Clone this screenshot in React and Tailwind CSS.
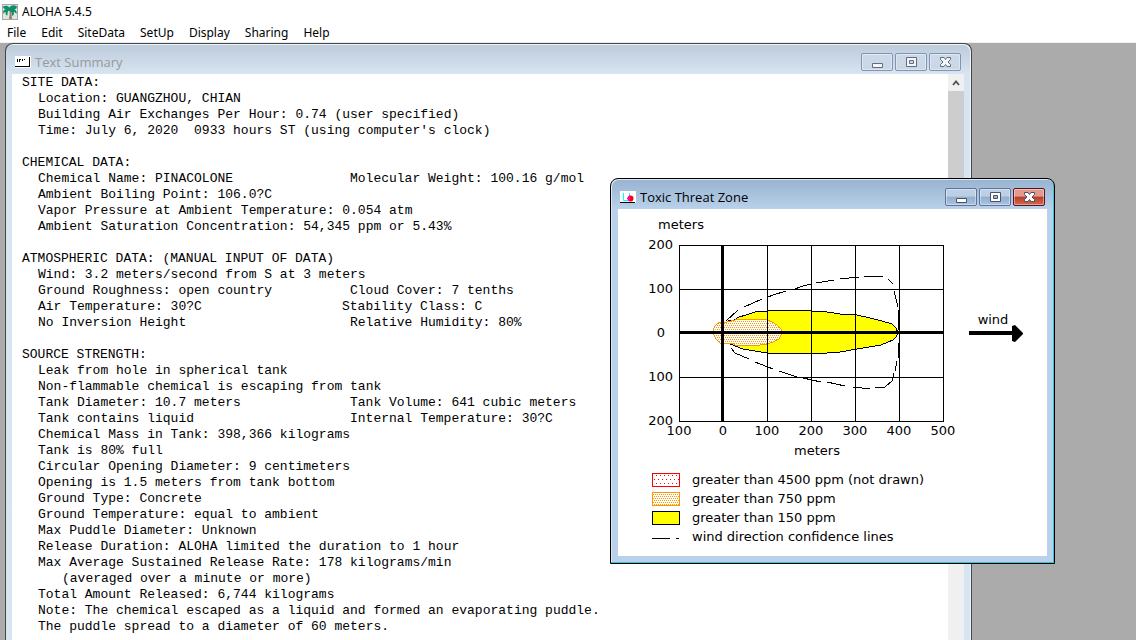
import React from 'react'

// [indent class, left text, right text, left column width]
const summary = [
  ['pl-0', 'SITE DATA:'],
  ['pl-4', 'Location: GUANGZHOU, CHIAN'],
  ['pl-4', 'Building Air Exchanges Per Hour: 0.74 (user specified)'],
  ['pl-4', "Time: July 6, 2020  0933 hours ST (using computer's clock)"],
  null,
  ['pl-0', 'CHEMICAL DATA:'],
  ['pl-4', 'Chemical Name: PINACOLONE', 'Molecular Weight: 100.16 g/mol'],
  ['pl-4', 'Ambient Boiling Point: 106.0?C'],
  ['pl-4', 'Vapor Pressure at Ambient Temperature: 0.054 atm'],
  ['pl-4', 'Ambient Saturation Concentration: 54,345 ppm or 5.43%'],
  null,
  ['pl-0', 'ATMOSPHERIC DATA: (MANUAL INPUT OF DATA)'],
  ['pl-4', 'Wind: 3.2 meters/second from S at 3 meters'],
  ['pl-4', 'Ground Roughness: open country', 'Cloud Cover: 7 tenths'],
  ['pl-4', 'Air Temperature: 30?C', 'Stability Class: C', 'w-[304px]'],
  ['pl-4', 'No Inversion Height', 'Relative Humidity: 80%'],
  null,
  ['pl-0', 'SOURCE STRENGTH:'],
  ['pl-4', 'Leak from hole in spherical tank'],
  ['pl-4', 'Non-flammable chemical is escaping from tank'],
  ['pl-4', 'Tank Diameter: 10.7 meters', 'Tank Volume: 641 cubic meters'],
  ['pl-4', 'Tank contains liquid', 'Internal Temperature: 30?C'],
  ['pl-4', 'Chemical Mass in Tank: 398,366 kilograms'],
  ['pl-4', 'Tank is 80% full'],
  ['pl-4', 'Circular Opening Diameter: 9 centimeters'],
  ['pl-4', 'Opening is 1.5 meters from tank bottom'],
  ['pl-4', 'Ground Type: Concrete'],
  ['pl-4', 'Ground Temperature: equal to ambient'],
  ['pl-4', 'Max Puddle Diameter: Unknown'],
  ['pl-4', 'Release Duration: ALOHA limited the duration to 1 hour'],
  ['pl-4', 'Max Average Sustained Release Rate: 178 kilograms/min'],
  ['pl-10', '(averaged over a minute or more)'],
  ['pl-4', 'Total Amount Released: 6,744 kilograms'],
  ['pl-4', 'Note: The chemical escaped as a liquid and formed an evaporating puddle.'],
  ['pl-4', 'The puddle spread to a diameter of 60 meters.'],
]

const menus = ['File', 'Edit', 'SiteData', 'SetUp', 'Display', 'Sharing', 'Help']

function PalmIcon() {
  return (
    <svg viewBox="0 0 16 16" className="w-4 h-4 shrink-0" aria-hidden="true">
      <rect width="16" height="16" fill="#a8a8a8" />
      <rect x="1" y="1" width="14" height="14" fill="#dfe5e2" />
      <path d="M7 15c.8-3 .8-6 .3-9h1.700c.5 3 .5 6 1 9z" fill="#9a7b58" />
      <path d="M8 7C6 6 5.500 8 5.500 11.500 3.500 11 3 9.500 4 8 2.500 8 1.500 9 1.500 10 .5 7.500 1.500 5.500 4 5 2.500 5 1 4.500 1 2.500c2.500-1.500 5-1 6.500 1C9 1 12 .5 15 2.500c0 1.500-1 2.500-2.500 3C14.500 6 15 8 14.500 10c-1-1.500-2-2-3-2 1 1.500.5 3-1.500 4C10 9.500 9.500 7.500 8 7z" fill="#0f8f68" />
    </svg>
  )
}

function SummaryIcon() {
  return (
    <svg viewBox="0 0 16 12" className="w-4 h-3 shrink-0" shapeRendering="crispEdges" aria-hidden="true">
      <rect width="16" height="12" fill="#fff" />
      <path d="M0 10h15v1H0zM14 1h1v10h-1zM2 3h1v3H2zM4 3h2v1H4zM4 4h1v2H4zM7 3h1v2H7zM9 3h1v1H9z" fill="#000" />
    </svg>
  )
}

function ThreatIcon() {
  return (
    <svg viewBox="0 0 16 12" className="w-4 h-3 shrink-0" aria-hidden="true">
      <rect width="16" height="12" fill="#fff" />
      <path d="M3.500 2v7.500H8M9.500 2v3" fill="none" stroke="#0ff" />
      <circle cx="10.500" cy="7.500" r="3" fill="#f00" />
      <path d="M9.500 4v6M7 7.500h2" stroke="#f0f" />
      <path d="M0 11.500h15" stroke="#000" />
    </svg>
  )
}

const glyphs = {
  Minimize: <path d="M11.500 9.500h10v4h-10z" fill="#fff" stroke="#4b5068" />,
  Restore: <path d="M11.500 3.500h10v9h-10zM14.500 6.500v3h4v-3z" fill="#fff" fillRule="evenodd" stroke="#4b5068" />,
  Close: (
    <path d="M11.500 3.500h3.500l1.500 2 1.500-2h3.500v2l-2.500 2.500 2.500 2.500v2H18l-1.500-2-1.500 2h-3.500v-2l2.500-2.500-2.500-2.500z" fill="#fff" stroke="#4b5068" />
  ),
}

function CaptionButton({ name, active }) {
  let look = 'border-[#8493b3] bg-linear-to-b from-[#cbd9e8] to-[#c9d7e7]'
  if (active) look = 'border-[#5f7394] bg-linear-to-b from-[#bccfe4] from-45% via-[#94afcf] via-50% to-[#a8c3e0]'
  if (active && name === 'Close') look = 'border-[#5a1420] bg-linear-to-b from-[#e39a8e] from-45% via-[#b83c28] via-50% to-[#cf6a4c]'
  return (
    <button type="button" aria-label={name} className={`w-8 h-[18px] rounded-xs border inset-ring inset-ring-white/40 ${look}`}>
      <svg viewBox="1 0 30 16" className={`w-full h-full ${active ? '' : 'opacity-80'}`}>{glyphs[name]}</svg>
    </button>
  )
}

function TitleBar({ icon, title, active }) {
  return (
    <div className="flex items-center h-[30px] px-[3px] pt-[5px]">
      {icon}
      <h2 className={`ml-1 flex-1 font-['Open_Sans',sans-serif] text-[13px] leading-4 ${active ? 'text-black' : 'text-[#999]'}`}>{title}</h2>
      <div className="flex gap-0.5">
        <CaptionButton name="Minimize" active={active} />
        <CaptionButton name="Restore" active={active} />
        <CaptionButton name="Close" active={active} />
      </div>
    </div>
  )
}

// Drawn with the release point at 0,0 and 44 units per 100 meters
function ThreatPlot() {
  const xTicks = [-44, 0, 44, 88, 132, 176, 220]
  const yTicks = [-88, -44, 0, 44, 88]
  return (
    <svg viewBox="-105 -124 429 261" className="block w-full" fontSize="13" role="img" aria-label="Toxic threat zone plot">
      <defs>
        <pattern id="dots" width="2" height="4" patternUnits="userSpaceOnUse">
          <rect width="2" height="4" fill="#fff" />
          <path d="M0 0h1v1H0zM1 2h1v1H1z" fill="#ff9600" />
        </pattern>
      </defs>
      <path
        d="M5-12 11-13 16-16 23-18 32-21 44-22 52-23H85L88-22 104-21 117-19 134-18 147-15 159-12 169-9 173-5 175 0 173 4 170 7 158 12 134 16 117 19 104 20H44L20 16 12 13 5 10z"
        fill="#ff0" stroke="#000" shapeRendering="crispEdges"
      />
      <path
        d="M-10-3-8-7-5-10-1-11H4L12-13 17-14H34L44-13 49-11 54-8 57-5 59-3 58 2 56 6 50 9 44 11 37 12 14 13 9 10H-3L-7 6-9 2z"
        fill="url(#dots)" stroke="#ff9600" shapeRendering="crispEdges"
      />
      <g fill="#000" shapeRendering="crispEdges">
        {xTicks.map((x) => <rect key={x} x={x} y="-88" width="1" height="177" />)}
        {yTicks.map((y) => <rect key={y} x="-44" y={y} width="265" height="1" />)}
        <rect x="-2" y="-88" width="3" height="176" />
        <rect x="-44" y="-2" width="264" height="3" />
      </g>
      <path
        d="M3-12 15-23M21-26 39-34M45-36 50-38 63-42M69-43 80-47 88-49M93-50 111-53M117-54 136-56M141-57H160M165-54 170-49M171-42 175-26M175-23 176-3M8 15 12 20 26 26M32 29 50 36M56 38 74 44M80 45 98 49M104 49 122 53M130 54 147 56M152 55 162 54 169 48 171 40M172 38 174 28M175 25 176 10"
        fill="none" stroke="#000" shapeRendering="crispEdges"
      />
      <path d="M246-2h43v-5l3-1 8 8v1l-8 8-3-1V2h-43z" fill="#000" />
      <g textAnchor="middle">
        {xTicks.map((x) => <text key={x} x={x} y="102">{Math.abs(x / 0.44)}</text>)}
        <text x="94" y="122">meters</text>
        <text x="-42" y="-104">meters</text>
        <text x="270" y="-9">wind</text>
      </g>
      <g textAnchor="end">
        {yTicks.map((y) => <text key={y} x={y === 0 ? -58 : -50} y={y + 4}>{Math.abs(y / 0.44)}</text>)}
      </g>
    </svg>
  )
}

function Swatch({ kind }) {
  return (
    <svg viewBox="0 0 28 14" className="w-7 h-3.5 shrink-0" shapeRendering="crispEdges" aria-hidden="true">
      <defs>
        <pattern id="sparse" width="4" height="8" patternUnits="userSpaceOnUse">
          <path d="M0 2h1v1H0zM2 6h1v1H2z" fill="#f00" />
        </pattern>
      </defs>
      {kind === 'red' && <rect x=".5" y=".5" width="27" height="13" fill="url(#sparse)" stroke="#f00" />}
      {kind === 'orange' && <rect x=".5" y=".5" width="27" height="13" fill="url(#dots)" stroke="#ff9600" />}
      {kind === 'yellow' && <rect x=".5" y=".5" width="27" height="13" fill="#ff0" stroke="#000" />}
      {kind === 'line' && <path d="M0 8.500h18M24 8.500h3" stroke="#000" />}
    </svg>
  )
}

const legend = [
  ['red', 'greater than 4500 ppm (not drawn)'],
  ['orange', 'greater than 750 ppm'],
  ['yellow', 'greater than 150 ppm'],
  ['line', 'wind direction confidence lines'],
]

export default function App() {
  return (
    <div className="h-screen flex flex-col overflow-hidden bg-white text-black font-['Noto_Sans',sans-serif]">
      <header className="shrink-0 border-b border-[#f0f0f0]">
        <div className="flex items-center gap-1 h-[23px] pl-0.5">
          <PalmIcon />
          <h1 className="text-xs leading-4">ALOHA 5.4.5</h1>
        </div>
        <nav className="flex gap-[15px] h-[19px] pl-[7px] text-xs">
          {menus.map((m) => <button key={m} type="button">{m}</button>)}
        </nav>
      </header>

      <main className="relative flex-1 min-h-0 bg-[#ababab]">
        <section className="absolute left-[5px] top-0 bottom-0 w-[967px] flex flex-col rounded-t-lg border border-b-0 border-[#454545] bg-linear-to-b from-[#bccbda] to-[#d7e4f2] to-[30px] pl-1.5 pr-[7px] shadow-[inset_-1px_1px_0_#eef4fa]">
          <TitleBar icon={<SummaryIcon />} title="Text Summary" />
          <div className="flex flex-1 min-h-0 bg-white">
            <div className="flex-1 pt-px pl-2.5 overflow-hidden font-['Liberation_Mono',monospace] text-[13px] leading-4 whitespace-pre">
              {summary.map((row, i) =>
                row ? (
                  <div key={i} className={`flex ${row[0]}`}>
                    <span className={row[2] ? `${row[3] || 'w-[312px]'} shrink-0` : ''}>{row[1]}</span>
                    {row[2] && <span>{row[2]}</span>}
                  </div>
                ) : (
                  <div key={i} className="h-4" />
                )
              )}
            </div>
            <div className="w-4 flex flex-col bg-[#f0f0f0]">
              <button type="button" aria-label="Scroll up" className="h-[17px] flex items-center justify-center">
                <svg viewBox="0 0 8 6" className="w-2 h-1.5"><path d="M1 5l3-3.500L7 5" fill="none" stroke="#505050" strokeWidth="1.800" /></svg>
              </button>
              <div className="h-80 bg-[#cdcdcd]" />
            </div>
          </div>
        </section>

        <section className="absolute left-[610px] top-[135px] w-[445px] rounded-t-lg border border-black bg-linear-to-b from-[#98b3d0] to-[#b9d1ea] to-[30px] px-[7px] pb-[7px] shadow-[inset_-1px_-1px_0_#35c4de,inset_1px_1px_0_#dce8f4]">
          <div className="-mx-px">
            <TitleBar icon={<ThreatIcon />} title="Toxic Threat Zone" active />
          </div>
          <div className="bg-white pb-2.5 font-['DejaVu_Sans',sans-serif] text-[13px]">
            <ThreatPlot />
            <ul className="pl-[34px]">
              {legend.map(([kind, label]) => (
                <li key={kind} className="flex items-center gap-3 h-[19px]">
                  <Swatch kind={kind} />
                  <span className="leading-4">{label}</span>
                </li>
              ))}
            </ul>
          </div>
        </section>
      </main>
    </div>
  )
}
